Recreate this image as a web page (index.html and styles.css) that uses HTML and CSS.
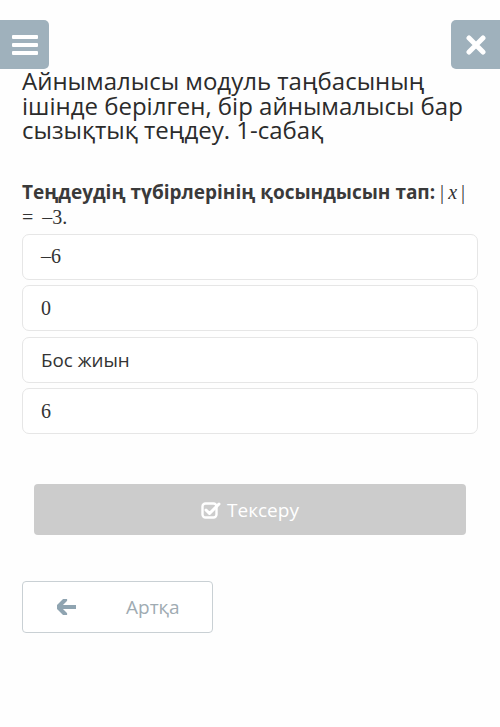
FILE: index.html
```html
<!DOCTYPE html>
<html lang="kk">
  <head>
    <meta charset="UTF-8" />
    <meta name="viewport" content="width=device-width, initial-scale=1" />
    <title>Айнымалысы модуль таңбасының ішінде</title>
    <link rel="stylesheet" href="styles.css">
  </head>
  <body>
    <div class="topbar">
      <button class="icon-btn menu-btn" aria-label="Мәзір">
        <svg width="26" height="22" viewBox="0 0 26 22">
          <rect x="0" y="1" width="26" height="4" rx="1" fill="#fff" />
          <rect x="0" y="9" width="26" height="4" rx="1" fill="#fff" />
          <rect x="0" y="17" width="26" height="4" rx="1" fill="#fff" />
        </svg>
      </button>
      <button class="icon-btn close-btn" aria-label="Жабу">
        <svg width="20" height="20" viewBox="0 0 20 20">
          <path d="M3 3 L17 17 M17 3 L3 17" stroke="#fff" stroke-width="5" stroke-linecap="round" />
        </svg>
      </button>
    </div>

    <div class="content">
      <h1 class="lesson-title">Айнымалысы модуль таңбасының ішінде берілген, бір айнымалысы бар сызықтық теңдеу. 1-сабақ</h1>

      <p class="question">
        Теңдеудің түбірлерінің қосындысын тап: <span class="math">|<i class="var">x</i>|</span>
        <span class="math nowrap">= –3.</span>
      </p>

      <ul class="answers">
        <li class="answer"><span class="math">–6</span></li>
        <li class="answer"><span class="math">0</span></li>
        <li class="answer">Бос жиын</li>
        <li class="answer"><span class="math">6</span></li>
      </ul>

      <div class="check-row">
        <button class="check-btn" disabled>
          <svg width="20" height="18" viewBox="0 0 20 18">
            <rect x="1.5" y="2.5" width="14" height="14" rx="3" fill="none" stroke="#fff" stroke-width="2.4" />
            <path d="M5 9 L8.5 12.5 L18 3" fill="none" stroke="#fff" stroke-width="3" stroke-linecap="round" stroke-linejoin="round" />
          </svg>
          Тексеру
        </button>
      </div>

      <button class="back-btn">
        <svg class="back-arrow" width="19" height="16" viewBox="0 0 19 16">
          <path d="M8 1 L1 8 L8 15 M2 8 H18" fill="none" stroke="#8fa4b1" stroke-width="4.2" stroke-linecap="round" stroke-linejoin="round" />
        </svg>
        <span>Артқа</span>
      </button>
    </div>
  </body>
</html>
```

FILE: styles.css
```css
/* Base styles */
body {
  margin: 0;
  background: #fefefe;
  color: #333333;
  font-family: "Open Sans", "Noto Sans", sans-serif;
}

/* Top bar */
.topbar {
  display: flex;
  justify-content: space-between;
  padding-top: 20px;
}

.icon-btn {
  width: 49px;
  height: 49px;
  border: none;
  padding: 0;
  background-color: #9fb1bc;
  display: flex;
  align-items: center;
  justify-content: center;
  cursor: pointer;
}

.menu-btn {
  border-radius: 0 5px 5px 0;
}

.close-btn {
  border-radius: 5px 0 0 5px;
}

/* Content */
.content {
  padding: 0 22px;
}

.lesson-title {
  margin: 0;
  font-size: 24px;
  font-weight: 400;
  line-height: 24.5px;
  color: #2b2b2b;
}

.question {
  margin: 37px 0 4px;
  font-size: 19px;
  font-weight: 700;
  line-height: 25px;
  color: #3a3a3a;
}

.math {
  font-family: "Liberation Serif", "DejaVu Serif", serif;
  font-weight: 400;
  font-size: 20px;
  color: #333333;
}

.var {
  padding: 0 4px;
}

.nowrap {
  white-space: nowrap;
  word-spacing: 4px;
}

/* Answers */
.answers {
  list-style: none;
  margin: 0;
  padding: 0;
  display: flex;
  flex-direction: column;
  gap: 5.5px;
}

.answer {
  height: 46px;
  box-sizing: border-box;
  padding: 0 18px;
  display: flex;
  align-items: center;
  border: 1px solid #e6e6e6;
  border-radius: 7px;
  background: #ffffff;
  font-size: 18.8px;
  color: #333333;
}

/* Check button */
.check-row {
  padding: 50px 12px 0;
}

.check-btn {
  width: 100%;
  height: 51px;
  border: none;
  border-radius: 4px;
  background-color: #cccccc;
  color: #ffffff;
  font-family: inherit;
  font-size: 19px;
  display: flex;
  align-items: center;
  justify-content: center;
  gap: 6px;
}

/* Back button */
.back-btn {
  margin-top: 46px;
  width: 191px;
  height: 52px;
  border: 1px solid #c9d0d4;
  border-radius: 4px;
  background: #ffffff;
  color: #a0abb2;
  font-family: inherit;
  font-size: 19px;
  display: flex;
  align-items: center;
  padding: 0 0 0 34px;
  cursor: pointer;
}

.back-arrow {
  margin-right: 50px;
}
```
